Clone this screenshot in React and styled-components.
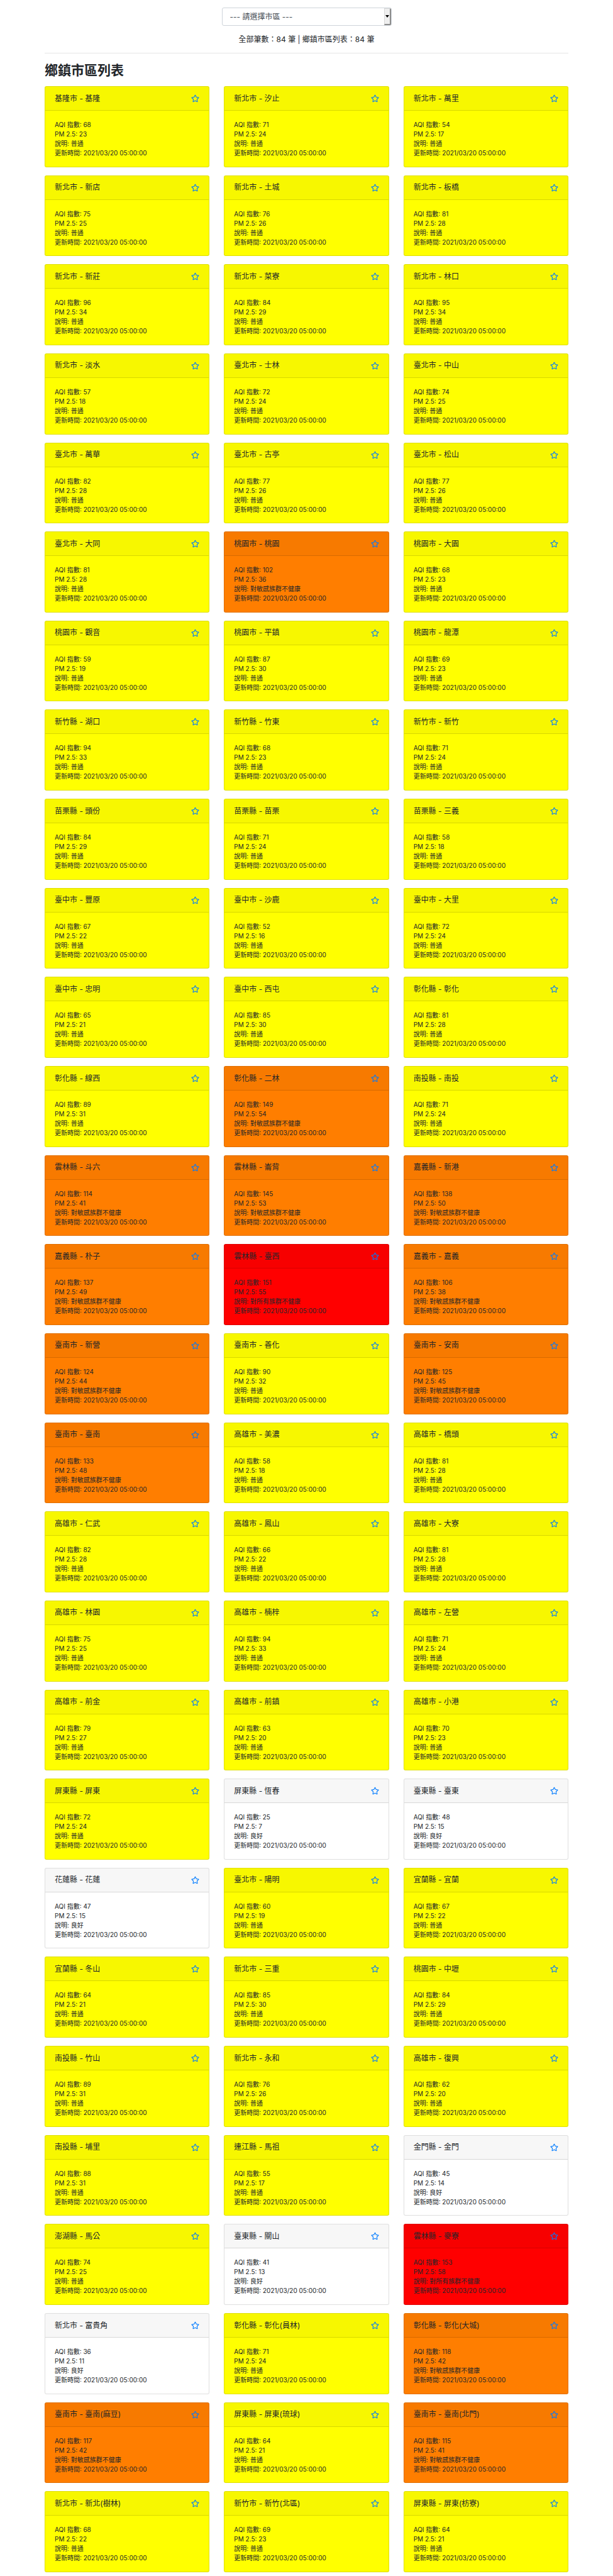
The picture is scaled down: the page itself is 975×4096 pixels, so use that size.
import React from "react";
import styled, { createGlobalStyle } from "styled-components";
import { FaRegStar } from "react-icons/fa";

const GlobalStyle = createGlobalStyle`
  *, *::before, *::after { box-sizing: border-box; }
  body {
    margin: 0;
    background: #fff;
    color: #212529;
    font-family: Inter, "Noto Sans CJK TC", sans-serif;
    font-size: 12px;
    line-height: 18px;
  }
`;

const Page = styled.main`
  display: flex;
  flex-direction: column;
  min-height: 100vh;
  padding: 12px 71px 6px;
`;

const Toolbar = styled.header`
  display: flex;
  flex-direction: column;
  align-items: center;
  gap: 13px;
  padding-bottom: 12px;
  border-bottom: 1px solid #e5e5e5;
`;

const SelectBox = styled.div`
  position: relative;
  width: 270px;
  max-width: 100%;
`;

const Select = styled.select`
  display: block;
  width: 100%;
  height: 29px;
  padding: 0 12px;
  appearance: none;
  background: #fff;
  border: 1px solid #ced4da;
  border-radius: 3px;
  color: #495057;
  font: inherit;
`;

const SelectArrow = styled.span`
  position: absolute;
  top: 1px;
  right: 1px;
  bottom: 1px;
  display: flex;
  align-items: center;
  justify-content: center;
  width: 11px;
  background: #efefef;
  border-style: solid;
  border-width: 1px 2px 2px 1px;
  border-color: #d8d8d8 #8c8c8c #8c8c8c #d8d8d8;
  border-radius: 0 2px 2px 0;
  pointer-events: none;
`;

const Summary = styled.p`
  margin: 0;
`;

const Heading = styled.h1`
  margin: 14px 0 12px;
  font-size: 21px;
  font-weight: 600;
  line-height: 26px;
`;

const CardGrid = styled.section`
  flex: 1;
  display: grid;
  grid-template-columns: repeat(3, minmax(0, 1fr));
  grid-auto-rows: 1fr;
  gap: 13px 23px;
`;

const Card = styled.article`
  display: flex;
  flex-direction: column;
  background: ${({ $color }) => $color};
  border: 1px solid rgba(0, 0, 0, 0.125);
  border-radius: 3px;
`;

const CardHeader = styled.header`
  display: flex;
  align-items: center;
  justify-content: space-between;
  height: 38px;
  padding: 0 15px;
  background: rgba(0, 0, 0, 0.03);
  border-bottom: 1px solid rgba(0, 0, 0, 0.125);
  border-radius: 2px 2px 0 0;
`;

const CardTitle = styled.h2`
  margin: 0;
  font-size: 12px;
  font-weight: 400;
  line-height: 18px;
`;

const StarButton = styled.button`
  display: flex;
  padding: 0;
  background: none;
  border: 0;
  color: #007bff;
  font-size: 13px;
  cursor: pointer;
`;

const CardBody = styled.div`
  flex: 1;
  padding: 15px 15px 8px;
  font-size: 10px;
  line-height: 15px;
`;

const Reading = styled.p`
  margin: 0;
`;

const stations = `
基隆市,基隆,68,23|新北市,汐止,71,24|新北市,萬里,54,17
新北市,新店,75,25|新北市,土城,76,26|新北市,板橋,81,28
新北市,新莊,96,34|新北市,菜寮,84,29|新北市,林口,95,34
新北市,淡水,57,18|臺北市,士林,72,24|臺北市,中山,74,25
臺北市,萬華,82,28|臺北市,古亭,77,26|臺北市,松山,77,26
臺北市,大同,81,28|桃園市,桃園,102,36|桃園市,大園,68,23
桃園市,觀音,59,19|桃園市,平鎮,87,30|桃園市,龍潭,69,23
新竹縣,湖口,94,33|新竹縣,竹東,68,23|新竹市,新竹,71,24
苗栗縣,頭份,84,29|苗栗縣,苗栗,71,24|苗栗縣,三義,58,18
臺中市,豐原,67,22|臺中市,沙鹿,52,16|臺中市,大里,72,24
臺中市,忠明,65,21|臺中市,西屯,85,30|彰化縣,彰化,81,28
彰化縣,線西,89,31|彰化縣,二林,149,54|南投縣,南投,71,24
雲林縣,斗六,114,41|雲林縣,崙背,145,53|嘉義縣,新港,138,50
嘉義縣,朴子,137,49|雲林縣,臺西,151,55|嘉義市,嘉義,106,38
臺南市,新營,124,44|臺南市,善化,90,32|臺南市,安南,125,45
臺南市,臺南,133,48|高雄市,美濃,58,18|高雄市,橋頭,81,28
高雄市,仁武,82,28|高雄市,鳳山,66,22|高雄市,大寮,81,28
高雄市,林園,75,25|高雄市,楠梓,94,33|高雄市,左營,71,24
高雄市,前金,79,27|高雄市,前鎮,63,20|高雄市,小港,70,23
屏東縣,屏東,72,24|屏東縣,恆春,25,7|臺東縣,臺東,48,15
花蓮縣,花蓮,47,15|臺北市,陽明,60,19|宜蘭縣,宜蘭,67,22
宜蘭縣,冬山,64,21|新北市,三重,85,30|桃園市,中壢,84,29
南投縣,竹山,89,31|新北市,永和,76,26|高雄市,復興,62,20
南投縣,埔里,88,31|連江縣,馬祖,55,17|金門縣,金門,45,14
澎湖縣,馬公,74,25|臺東縣,關山,41,13|雲林縣,麥寮,153,58
新北市,富貴角,36,11|彰化縣,彰化(員林),71,24|彰化縣,彰化(大城),118,42
臺南市,臺南(麻豆),117,42|屏東縣,屏東(琉球),64,21|臺南市,臺南(北門),115,41
新北市,新北(樹林),68,22|新竹市,新竹(北區),69,23|屏東縣,屏東(枋寮),64,21
`
  .trim()
  .split(/[|\n]/)
  .map((entry) => {
    const [county, site, aqi, pm25] = entry.split(",");
    return { county, site, aqi: Number(aqi), pm25: Number(pm25) };
  });

const counties = [...new Set(stations.map((s) => s.county))];

function levelOf(aqi) {
  if (aqi <= 50) return { color: "#ffffff", status: "良好" };
  if (aqi <= 100) return { color: "#ffff00", status: "普通" };
  if (aqi <= 150) return { color: "#ff7e00", status: "對敏感族群不健康" };
  return { color: "#ff0000", status: "對所有族群不健康" };
}

function StationCard({ station }) {
  const { color, status } = levelOf(station.aqi);
  return (
    <Card $color={color}>
      <CardHeader>
        <CardTitle>{`${station.county} - ${station.site}`}</CardTitle>
        <StarButton type="button" aria-label={`收藏 ${station.site}`}>
          <FaRegStar />
        </StarButton>
      </CardHeader>
      <CardBody>
        <Reading>{`AQI 指數: ${station.aqi}`}</Reading>
        <Reading>{`PM 2.5: ${station.pm25}`}</Reading>
        <Reading>{`說明: ${status}`}</Reading>
        <Reading>更新時間: 2021/03/20 05:00:00</Reading>
      </CardBody>
    </Card>
  );
}

export default function App() {
  return (
    <>
      <GlobalStyle />
      <Page>
        <Toolbar>
          <SelectBox>
            <Select aria-label="請選擇市區" defaultValue="">
              <option value="">--- 請選擇市區 ---</option>
              {counties.map((county) => (
                <option key={county} value={county}>{county}</option>
              ))}
            </Select>
            <SelectArrow aria-hidden="true">
              <svg width="6" height="4" viewBox="0 0 6 4">
                <path d="M0 0h6L3 4z" fill="#000" />
              </svg>
            </SelectArrow>
          </SelectBox>
          <Summary>{`全部筆數：${stations.length} 筆 | 鄉鎮市區列表：${stations.length} 筆`}</Summary>
        </Toolbar>
        <Heading>鄉鎮市區列表</Heading>
        <CardGrid>
          {stations.map((station) => (
            <StationCard key={`${station.county}-${station.site}`} station={station} />
          ))}
        </CardGrid>
      </Page>
    </>
  );
}
